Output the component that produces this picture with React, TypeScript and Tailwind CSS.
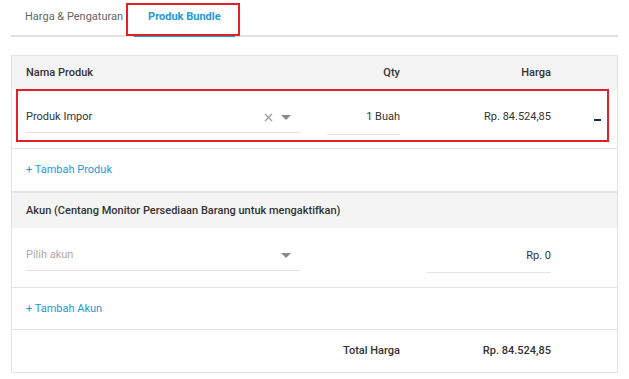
import React from 'react';

const Caret = () => (
  <svg width="10" height="6" viewBox="0 0 10 6" className="shrink-0">
    <path d="M0 0 L10 0 L5 5 Z" fill="#8a8a8a" />
  </svg>
);

const Cross = () => (
  <svg width="9" height="9" viewBox="0 0 9 9" className="shrink-0">
    <path d="M1 1 L8 8 M8 1 L1 8" stroke="#9a9a9a" strokeWidth="1.3" />
  </svg>
);

const App = () => {
  return (
    <div className="w-[629px] h-[379px] bg-white px-[11px] text-[11px] leading-[14px] text-[#333]" style={{ fontFamily: 'Roboto, "Liberation Sans", sans-serif' }}>
      {/* tabs */}
      <div className="flex h-[37px] border-b-2 border-[#e2e2e2]">
        <div className="pl-[14px] pr-[11px] pt-[10px] text-[#666]">Harga &amp; Pengaturan</div>
        <div className="relative -mb-[2px] flex">
          <div className="px-[14px] pt-[10px] text-[#1e9ad8] font-bold border-b-2 border-[#1e9ad8]">Produk Bundle</div>
          <div className="absolute left-[-8px] right-[-5px] top-[3px] bottom-[1px] border-2 border-[#e3202a]" />
        </div>
      </div>

      {/* card */}
      <div className="mt-[18px] border border-[#e3e3e3]">
        <div className="flex h-[34px] items-center bg-[#f4f4f4] pl-[14px] font-medium">
          <div className="w-[274px]">Nama Produk</div>
          <div className="ml-[27px] w-[73px] text-right">Qty</div>
          <div className="ml-[27px] w-[124px] text-right">Harga</div>
        </div>

        <div className="relative flex h-[59px] pl-[14px] border-b border-[#e3e3e3]">
          <div className="w-[274px] pt-[20px]">
            <div className="flex items-start h-[23px] border-b border-[#e3e3e3]">
              <span className="flex-1">Produk Impor</span>
              <span className="mr-[8px] pt-[3px]"><Cross /></span>
              <span className="mr-[9px] pt-[5px]"><Caret /></span>
            </div>
          </div>
          <div className="ml-[27px] w-[73px] pt-[20px]">
            <div className="h-[25px] text-right border-b border-[#e3e3e3]">1 Buah</div>
          </div>
          <div className="ml-[27px] w-[124px] pt-[20px]">
            <div className="text-right">Rp. 84.524,85</div>
          </div>
          <div className="ml-[43px] pt-[29px]">
            <div className="w-[7px] h-[2px] bg-[#1b2a3a]" />
          </div>
          <div className="absolute left-[4px] right-[8px] top-[-1px] h-[53px] border-2 border-[#e3202a]" />
        </div>

        <div className="flex h-[42px] items-center pl-[14px] text-[#1e9ad8]">+ Tambah Produk</div>

        <div className="border-t-2 border-[#e3e3e3]">
          <div className="flex h-[35px] items-center bg-[#f4f4f4] pl-[14px] font-medium">
            Akun (Centang Monitor Persediaan Barang untuk mengaktifkan)
          </div>
          <div className="flex h-[60px] pl-[14px] border-b border-[#e3e3e3]">
            <div className="w-[274px] pt-[20px]">
              <div className="flex items-start h-[23px] border-b border-[#e3e3e3]">
                <span className="flex-1 text-[#aaa]">Pilih akun</span>
                <span className="mr-[9px] pt-[5px]"><Caret /></span>
              </div>
            </div>
            <div className="ml-[127px] w-[124px] pt-[21px]">
              <div className="h-[24px] text-right border-b border-[#e3e3e3]">Rp. 0</div>
            </div>
          </div>
          <div className="flex h-[42px] items-center pl-[14px] text-[#1e9ad8] border-b border-[#e3e3e3]">+ Tambah Akun</div>
          <div className="flex h-[42px] items-center pl-[14px] font-medium">
            <div className="w-[274px]" />
            <div className="ml-[27px] w-[73px] text-right">Total Harga</div>
            <div className="ml-[27px] w-[124px] text-right">Rp. 84.524,85</div>
          </div>
        </div>
      </div>
    </div>
  );
};

export default App;
